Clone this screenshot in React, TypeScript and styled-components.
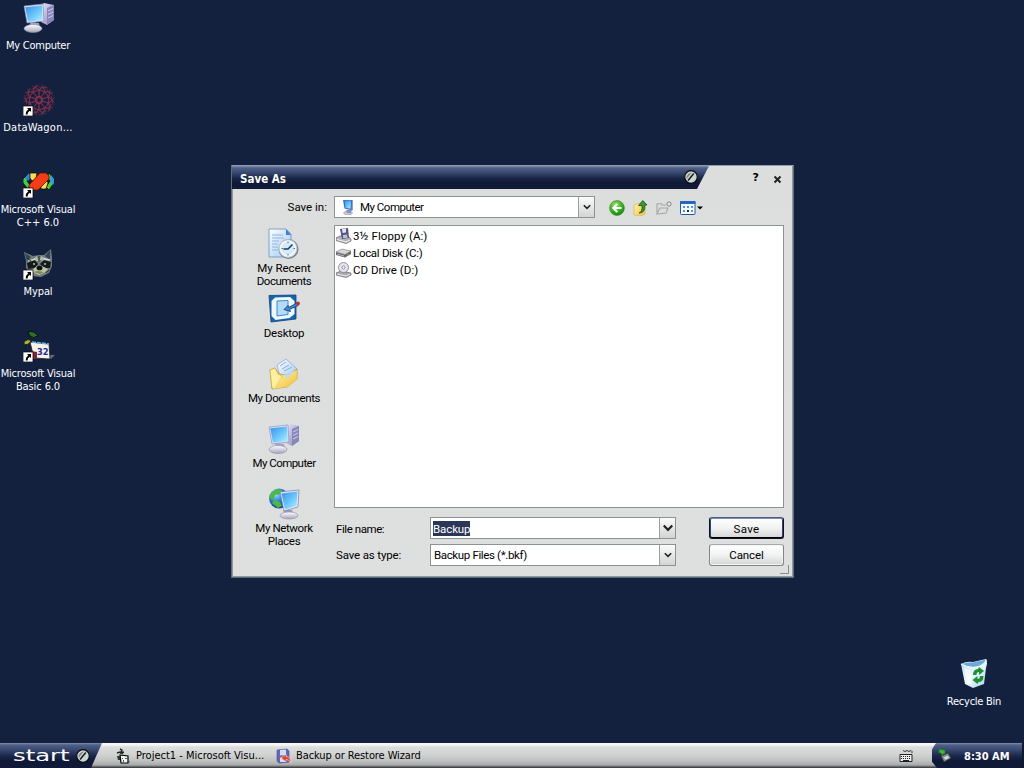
import React from "react";
import styled, { createGlobalStyle } from "styled-components";

const GlobalStyle = createGlobalStyle`
  * { box-sizing: border-box; }
  html, body { margin: 0; padding: 0; overflow: hidden; }
`;

const Screen = styled.div`
  position: relative;
  width: 1024px;
  height: 768px;
  display: flex;
  flex-direction: column;
  background: #13213f;
  font-family: "DejaVu Sans Condensed", "DejaVu Sans", sans-serif;
  font-size: 11px;
  overflow: hidden;
  cursor: default;
`;

const Desktop = styled.main`
  position: relative;
  flex: 1;
`;

const Txt = styled.span<{ $ls?: number }>`
  white-space: nowrap;
  letter-spacing: ${(p) => p.$ls ?? 0}px;
`;

const Caption = styled.div`
  display: flex;
  flex-direction: column;
  align-items: center;
`;

const Shortcut = styled.div<{ $x: number; $y: number }>`
  position: absolute;
  left: ${(p) => p.$x}px;
  top: ${(p) => p.$y}px;
  width: 78px;
  display: flex;
  flex-direction: column;
  align-items: center;
  gap: 5px;
  color: #fff;
  line-height: 13px;

  > svg {
    margin-left: 1px;
  }
`;

const Dialog = styled.section`
  position: absolute;
  left: 231px;
  top: 165px;
  width: 563px;
  height: 413px;
  display: flex;
  flex-direction: column;
  border: 1px solid #5f6c75;
  border-top-color: #8f9cae;
  box-shadow: inset -1px -1px 0 #8d9a9c, inset 1px 0 0 #8d9a9c;
  background: linear-gradient(#dcdddd, #dee0df);
  font-family: Roboto, sans-serif;
  font-size: 11.5px;
  color: #000;
`;

const TitleBar = styled.header`
  display: flex;
  height: 23px;
  align-items: stretch;
`;

const TitlePlate = styled.div`
  width: 477px;
  display: flex;
  align-items: center;
  justify-content: space-between;
  padding: 2px 11px 0 8px;
  clip-path: polygon(0 0, 100% 0, 465px 100%, 0 100%);
  background: linear-gradient(#8390ac 0, #4e5f88 2px, #3d4c74 6px, #1a274a 12px, #0f1936 17px, #101a38 100%);
  color: #fff;
  font: bold 11.5px "DejaVu Sans Condensed", sans-serif;

  > svg {
    margin-bottom: 3px;
  }
`;

const TitleButtons = styled.div`
  flex: 1;
  display: flex;
  justify-content: flex-end;
  align-items: center;
  gap: 14px;
  padding: 3px 11px 0 0;
  font: bold 11px "DejaVu Sans", sans-serif;
`;

const HelpMark = styled.span`
  padding-bottom: 3px;
`;

const DialogBody = styled.div`
  flex: 1;
  display: grid;
  grid-template-columns: 102px 450px;
  grid-template-rows: 36px 283px 1fr;
`;

const SaveInLabel = styled.label`
  padding: 11px 7px 0 0;
  text-align: right;
  line-height: 14px;
`;

const LookRow = styled.div`
  display: flex;
  align-items: center;
  padding: 0;
`;

const Combo = styled.div<{ $w: number; $h: number; $pad: number; $gap?: number }>`
  display: flex;
  align-items: center;
  width: ${(p) => p.$w}px;
  height: ${(p) => p.$h}px;
  border: 1px solid #8c9394;
  background: #fff;
  padding-left: ${(p) => p.$pad}px;
  gap: ${(p) => p.$gap ?? 0}px;
`;

const Arrow = styled.button`
  align-self: stretch;
  width: 16px;
  margin: 0 0 0 auto;
  padding: 0;
  display: flex;
  align-items: center;
  justify-content: center;
  border: 0;
  border-left: 1px solid #9aa0a2;
  background: linear-gradient(#fbfbfb, #d2d4d4);
`;

const Tools = styled.div`
  display: flex;
  align-items: center;
  gap: 7.500px;
  padding: 1px 0 0 14px;
`;

const Places = styled.nav`
  grid-row: 2 / 4;
  display: flex;
  flex-direction: column;
  padding: 3px 0 0 2px;
`;

const Place = styled.div`
  height: 65px;
  display: flex;
  flex-direction: column;
  align-items: center;
  gap: 2px;
  line-height: 13px;
`;

const FileList = styled.div`
  border: 1px solid #8c9394;
  background: #fff;
  padding: 1px 1px;
`;

const FileRow = styled.div`
  display: flex;
  align-items: center;
  height: 17px;
  gap: 1px;
`;

const Fields = styled.div`
  display: grid;
  grid-template-columns: 96px 279px 75px;
  grid-template-rows: 22px 22px;
  row-gap: 5px;
  padding-top: 9px;
  align-items: center;
`;

const FieldLabel = styled.label<{ $drop?: number }>`
  padding: ${(p) => p.$drop ?? 0}px 0 0 2px;
`;

const Selected = styled.span`
  background: #2b3658;
  color: #fff;
  line-height: 14px;
  padding-top: 1px;
`;

const PushButton = styled.button<{ $primary?: boolean }>`
  width: 75px;
  height: 22px;
  padding: ${(p) => (p.$primary ? "2px 0 0" : "0")};
  border-radius: 3px;
  font: inherit;
  color: #000;
  border: 1px solid ${(p) => (p.$primary ? "#0b1228" : "#7f8587")};
  border-top-color: ${(p) => (p.$primary ? "#4a5a82" : "#a5aaac")};
  box-shadow: ${(p) =>
    p.$primary
      ? "inset 0 1px #7f8eb4, inset 0 -1px #000, inset 1px 0 #34446c, inset -1px 0 #34446c"
      : "inset 0 0 0 1px #f6f6f6"};
  background: linear-gradient(#ffffff, #f1f2f2 50%, #d3d5d5);
`;

const Grip = styled.svg`
  position: absolute;
  right: 4px;
  bottom: 3px;
`;

const Taskbar = styled.footer`
  height: 25px;
  display: flex;
  align-items: stretch;
  background: linear-gradient(#fafafa 0, #f4f4f4 2px, #dcdddd 4px, #d2d4d3 11px, #bfc1c0 18px, #a9abab 22px, #55585c 24px, #2b2e36 25px);
  color: #000;
`;

const StartButton = styled.button`
  width: 102px;
  border: 0;
  padding: 1px 12px 0 13px;
  display: flex;
  align-items: center;
  justify-content: space-between;
  clip-path: polygon(0 0, 100% 0, 91px 100%, 0 100%);
  background: linear-gradient(#8390ac 0, #4e5f88 2px, #3d4c74 6px, #1a274a 13px, #0f1936 18px, #101a38 100%);
  color: #fff;
`;

const StartWord = styled.span`
  font: 15px/15px "DejaVu Sans", sans-serif;
  transform: scaleX(1.62);
  transform-origin: left;
  width: 57px;
  text-align: left;
`;

const Tasks = styled.div`
  flex: 1;
  display: flex;
  padding: 0 0 0 14px;
`;

const Task = styled.div<{ $w: number }>`
  width: ${(p) => p.$w}px;
  display: flex;
  align-items: center;
  gap: 4px;
`;

const Tray = styled.div`
  width: 92px;
  display: flex;
  align-items: center;
  gap: 12px;
  padding: 1px 0 0 6px;
  clip-path: polygon(4px 0, 100% 0, 100% 100%, 5px 100%, 0 75%, 0 25%);
  box-shadow: inset -2px 0 #101830;
  background: linear-gradient(#8390ac 0, #4e5f88 2px, #3d4c74 6px, #1a274a 13px, #0f1936 18px, #101a38 100%);
  color: #fff;
  font: bold 11px "DejaVu Sans Condensed", sans-serif;
`;

const KeyboardSlot = styled.div`
  display: flex;
  align-items: center;
  padding-right: 19px;
`;

const Defs = styled.svg`
  position: absolute;
`;

const Gradients = () => (
  <Defs width="0" height="0">
    <defs>
      <linearGradient id="scr" x1="0" y1="0" x2="1" y2="1">
        <stop offset="0" stopColor="#3d8fe4" />
        <stop offset=".5" stopColor="#66c3fb" />
        <stop offset="1" stopColor="#b8f0ff" />
      </linearGradient>
      <linearGradient id="case" x1="0" y1="0" x2="1" y2="1">
        <stop offset="0" stopColor="#e8e7f7" />
        <stop offset="1" stopColor="#8481b4" />
      </linearGradient>
      <linearGradient id="base" x1="0" y1="0" x2="0" y2="1">
        <stop offset="0" stopColor="#ffffff" />
        <stop offset="1" stopColor="#a5a5bc" />
      </linearGradient>
      <linearGradient id="folder" x1="0" y1="0" x2="1" y2="1">
        <stop offset="0" stopColor="#fff6b0" />
        <stop offset="1" stopColor="#f0bf3c" />
      </linearGradient>
      <linearGradient id="paper" x1="0" y1="0" x2="1" y2="1">
        <stop offset="0" stopColor="#ffffff" />
        <stop offset="1" stopColor="#9cc6f2" />
      </linearGradient>
      <radialGradient id="globe" cx=".35" cy=".3" r=".8">
        <stop offset="0" stopColor="#8be0ff" />
        <stop offset=".5" stopColor="#2277cf" />
        <stop offset="1" stopColor="#0c2f88" />
      </radialGradient>
      <radialGradient id="green" cx=".4" cy=".3" r=".8">
        <stop offset="0" stopColor="#9be06c" />
        <stop offset=".6" stopColor="#35a822" />
        <stop offset="1" stopColor="#137a12" />
      </radialGradient>
      <linearGradient id="bin" x1="0" y1="0" x2="1" y2="1">
        <stop offset="0" stopColor="#aed8f6" />
        <stop offset=".5" stopColor="#eefaff" />
        <stop offset="1" stopColor="#a4cdea" />
      </linearGradient>
    </defs>
  </Defs>
);

const ComputerIcon = () => (
  <svg width="32" height="32" viewBox="0 0 32 32">
    <path d="M18 3l3-2 10 2v15l-7 5-6-3z" fill="url(#case)" />
    <path d="M24 6l7-3v15l-7 5z" fill="#8885bb" />
    <path d="M25 9l5-2.500M25 12.500l5-2.500M25 16l5-2.500" stroke="#d5d3f0" />
    <path d="M7 20l9 1 1 5H8z" fill="#a4a4c4" />
    <ellipse cx="10" cy="26.500" rx="9" ry="4" fill="url(#base)" stroke="#8a8aa8" strokeWidth=".6" />
    <path d="M1 4l19-2 1 17-17 2z" fill="#dfe3f6" stroke="#8087b8" strokeWidth=".6" />
    <path d="M2.300 5.200l16.500-1.700 1 14.500L5 19.700z" fill="url(#scr)" />
  </svg>
);

const MiniComputer = () => (
  <svg width="16" height="16" viewBox="0 0 16 16">
    <path d="M10 1l3 0v10l-3 2z" fill="#9a98c4" />
    <ellipse cx="8" cy="14" rx="4.500" ry="1.800" fill="#c9c9da" stroke="#8888a5" strokeWidth=".5" />
    <path d="M6 11h5v3H7z" fill="#9292b4" />
    <path d="M3 1l9 .2-.5 10L4.500 9.500z" fill="#2d6fc4" />
    <path d="M4.500 2l6.500.3-.5 7.500-5-1z" fill="url(#scr)" />
  </svg>
);

const ShortcutMark = () => (
  <>
    <rect x="0" y="22" width="10" height="10" fill="#fff" stroke="#000" strokeWidth=".7" />
    <path d="M4 24h4v4L6.800 26.800Q4.500 28 4.500 30.500H2.800Q2.500 27 5.400 25.400z" fill="#000" />
  </>
);

const petals = [0, 36, 72, 108, 144, 180, 216, 252, 288, 324];

const DataWagonIcon = () => (
  <svg width="32" height="32" viewBox="0 0 32 32">
    <g fill="none" stroke="#82304a" strokeWidth=".7">
      {petals.map((a) => (
        <path key={a} d="M16 16Q9 9 11 4L16 1M16 16Q23 9 21 4L16 3M9 2l14 7M23 2L9 9" transform={`rotate(${a} 16 16)`} />
      ))}
      <circle cx="16" cy="16" r="3.500" stroke="#c03a54" />
    </g>
    <circle cx="16" cy="16" r="1.800" fill="#1c1c34" />
    <ShortcutMark />
  </svg>
);

const VisualCppIcon = () => (
  <svg width="32" height="32" viewBox="0 0 32 32">
    <path d="M6 7L0 13v4l5 6 2-4-3-4 4-5z" fill="#43cc3c" stroke="#000" strokeWidth=".7" />
    <path d="M6 7l-4 5 3 3 3-4z" fill="#2f7de0" />
    <path d="M7 12V7h7l-1 6-4 2z" fill="#f8dc50" stroke="#000" strokeWidth=".7" />
    <path d="M26 7l5 6v4l-5 7-3-3 4-6-3-4z" fill="#43cc3c" stroke="#000" strokeWidth=".7" />
    <path d="M28 9l3 4v4l-1 2-3-4z" fill="#2f9ae8" />
    <path d="M18 23v-5l6-4 1 3-2 6z" fill="#f8dc50" stroke="#000" strokeWidth=".7" />
    <path d="M6 19L17 7h6l3 3v3L15 24H9l-3-3z" fill="#f43d18" stroke="#5a1000" strokeWidth=".8" />
    <ShortcutMark />
  </svg>
);

const MypalIcon = () => (
  <svg width="32" height="32" viewBox="0 0 32 32">
    <path d="M1 4l9 4 6-1 5 0 7-6 1 9 0 8-3 7-8 4-9-1-6-8 0-7z" fill="#6f7c78" />
    <path d="M2 5l6 4-4 4zM27 2l-5 6 5 4z" fill="#34435a" />
    <path d="M14 8l2 7 2-7 6 3-3 2-4-1-5 2-4-1z" fill="#b0bab0" />
    <path d="M4 15l8-3 3 4-3 4-7 1zM28 14l-7-2-4 4 4 4 6 0z" fill="#141a1e" />
    <path d="M5 13l7-2M27 12l-6-1" stroke="#d8dfd0" strokeWidth="1.300" />
    <circle cx="11" cy="16" r=".9" fill="#c6d69a" />
    <circle cx="22" cy="16" r=".9" fill="#c6d69a" />
    <path d="M9 22l5-4h5l6 3-4 4-5 2-5-2z" fill="#c0c4a4" />
    <path d="M10 24l5-1 6 1-4 2z" fill="#7d8560" />
    <ellipse cx="16.500" cy="20" rx="3" ry="2.300" fill="#10120f" />
    <path d="M16 8v6M4 10l4 3M26 22l-3 3" stroke="#2b3332" />
    <ShortcutMark />
  </svg>
);

const VisualBasicIcon = () => (
  <svg width="32" height="32" viewBox="0 0 32 32">
    <path d="M5 2q6-2 10 4-5 3-8 0z" fill="#2f6d2a" stroke="#071306" />
    <path d="M1 12q4-4 7-1-3 5-7 3z" fill="#b2b33a" stroke="#24290a" />
    <path d="M24 25h8l-4 4h-6z" fill="#606b82" />
    <path d="M7 12l19 2 1 15-16-1z" fill="#f5f3e7" stroke="#1c1c20" strokeWidth=".8" />
    <path d="M9 12l17 2" stroke="#5db7ea" strokeWidth="1.600" strokeDasharray="4 1" />
    <path d="M8 21l6 1v7h-4z" fill="#812536" />
    <text x="14" y="25" fontFamily="DejaVu Sans" fontSize="9.500" fontWeight="bold" fill="#26269a" textLength="11.500" lengthAdjust="spacingAndGlyphs">32</text>
    <ShortcutMark />
  </svg>
);

const RecycleIcon = () => (
  <svg width="32" height="32" viewBox="0 0 32 32">
    <path d="M2 6q5-3 12-2l13-3q2 3 0 9l-2 16-11 4-8-4z" fill="url(#bin)" />
    <path d="M3 6q5-2 11-1.500L27 1.500q0 4-6 6-9 3-18-1.500z" fill="#6ea6da" />
    <path d="M2 6q10 6 19 2 6-3 6-6.500" fill="none" stroke="#e5f6ff" strokeWidth="1.200" />
    <path d="M5 10l3 15 5 2-2-15z" fill="#fff" opacity=".65" />
    <g fill="#1f9030">
      <path d="M14 17q0-6 5-6l1-2 5 4-5 4v-3q-2.500 0-2.500 3z" />
      <path d="M24.500 18q0 6-5 6l-1 2-5-4 5-4v3q2.500 0 2.500-3z" />
    </g>
  </svg>
);

const RecentIcon = () => (
  <svg width="32" height="32" viewBox="0 0 32 32">
    <path d="M1 1h17l5 5v23H1z" fill="url(#paper)" stroke="#5f8fcb" strokeWidth=".8" />
    <path d="M18 1l5 6h-5z" fill="#3d7fd0" />
    <path d="M4 7h11M4 10h12M4 13h7M4 16h6M4 19h6M4 22h6" stroke="#8cb3e6" />
    <circle cx="20.500" cy="21" r="10" fill="#77818f" />
    <circle cx="20" cy="20.500" r="8.800" fill="#f4f7fa" stroke="#c4ccd6" />
    <circle cx="20" cy="20.500" r="6.500" fill="#d4eaf7" />
    <path d="M19.500 21.500l5-5M20 21h-4.500" stroke="#183b64" strokeWidth="1.500" />
    <path d="M20 13.500V15M20 26v1.500M13.500 20.500H15M25.500 20.500H27" stroke="#4f6b8c" />
  </svg>
);

const DesktopIcon = () => (
  <svg width="32" height="32" viewBox="0 0 32 32">
    <path d="M1 2.500L28 2v24L3 29z" fill="#1763ad" stroke="#0c4381" strokeWidth=".8" />
    <path d="M7 4.500l15-.5 4.500 4v13l-5 4-14 2-4-4V8z" fill="#eef8fd" />
    <path d="M9 8l11-.5v14L9 23z" fill="#b4dcf8" stroke="#3b88cd" />
    <path d="M16 16.500l4-4 .6 2L29 10l1 2.500-8.500 4 1 2z" fill="#3f8cd4" stroke="#143f78" strokeWidth=".9" />
    <circle cx="30" cy="10.500" r="1.900" fill="#c62d35" />
  </svg>
);

const DocumentsIcon = () => (
  <svg width="32" height="32" viewBox="0 0 32 32">
    <path d="M9 7l9-6 11 10-5 12-12-4z" fill="url(#paper)" stroke="#7ba6d8" strokeWidth=".7" />
    <path d="M12 8l6-4M14 11l7-4M16 13l8-4" stroke="#86aede" />
    <path d="M2 12l5-2 4 6 8 1 10-6v10l-10 8-15 2z" fill="url(#folder)" stroke="#b88b26" strokeWidth=".7" />
    <path d="M15 17l12-6-7 10z" fill="#b5dcf4" opacity=".9" />
    <path d="M2 12l5-2 3 6 4 2-7 13-3-1z" fill="#fff0a0" stroke="#c49d39" strokeWidth=".5" />
    <path d="M5 31l7-11 8-1 9-7v10l-9 7z" fill="url(#folder)" opacity=".75" />
  </svg>
);

const NetworkIcon = () => (
  <svg width="32" height="32" viewBox="0 0 32 32">
    <circle cx="11" cy="10.500" r="10" fill="url(#globe)" />
    <path d="M3 5l6-4 5 1-2 4-5 1-2 5-4-2zM6 12l6 2 2 4-4 2-6-5z" fill="#4fb841" />
    <path d="M15 22h9l2 5h-9z" fill="#9b9cba" />
    <ellipse cx="21" cy="27.500" rx="9" ry="3.500" fill="url(#base)" stroke="#8a8aa8" strokeWidth=".6" />
    <path d="M12 4l19-2-1 17-14 4z" fill="#e5e8f8" stroke="#777eaa" strokeWidth=".7" />
    <path d="M13.500 5.500l16-2-1 14.500L17 21.300z" fill="url(#scr)" />
  </svg>
);

const BadgeIcon = () => (
  <svg width="14" height="14" viewBox="0 0 14 14">
    <circle cx="7" cy="7" r="6.300" fill="#cdd5cf" stroke="#070b14" strokeWidth="1.200" />
    <path d="M2.500 9Q2 4 8 2.200z" fill="#77837d" />
    <path d="M4 10.500L9.800 3.500" stroke="#10151c" strokeWidth="1.400" />
  </svg>
);

const FloppyIcon = () => (
  <svg width="16" height="16" viewBox="0 0 16 16">
    <path d="M0 10l4-2h8l3 3v2l-5 2.500-10-3z" fill="#b4b4b8" stroke="#65656c" strokeWidth=".7" />
    <path d="M4 1l8-1 1 10-7 1z" fill="#50547f" />
    <path d="M6 1l4-.5v4L6.500 5z" fill="#e3e5f1" />
    <path d="M7 7l4-.5.5 3.500H7z" fill="#b9bdd7" />
    <path d="M1 11.500l9 2.500 4-2" stroke="#f4f4f4" fill="none" />
  </svg>
);

const DiskIcon = () => (
  <svg width="16" height="16" viewBox="0 0 16 16">
    <path d="M0 7l6-3 9 2v3l-6 3.500L0 10z" fill="#66666a" />
    <path d="M0 7l6-3 9 2-6 3.500z" fill="#d6d6d8" stroke="#85858a" strokeWidth=".5" />
    <path d="M1 9l7 2" stroke="#b8b8bc" />
    <circle cx="12" cy="9.500" r=".7" fill="#63c25b" />
  </svg>
);

const CdIcon = () => (
  <svg width="16" height="16" viewBox="0 0 16 16">
    <path d="M0 11l5-2 10 2v2l-5 2.500-10-2.500z" fill="#a9a9ad" stroke="#66666b" strokeWidth=".7" />
    <circle cx="7.500" cy="5.500" r="5" fill="#e4e4ee" stroke="#7e7e88" strokeWidth=".8" />
    <circle cx="7.500" cy="5.500" r="1.500" fill="#fff" stroke="#777785" strokeWidth=".8" />
    <path d="M1 12l9 2 4-2" stroke="#f1f1f1" fill="none" />
  </svg>
);

const BackIcon = () => (
  <svg width="16" height="16" viewBox="0 0 16 16">
    <circle cx="8" cy="8" r="7.400" fill="url(#green)" stroke="#2d8a20" strokeWidth=".6" />
    <path d="M12.500 8H5M8.300 4L4.300 8l4 4" fill="none" stroke="#fff" strokeWidth="2" />
  </svg>
);

const UpIcon = () => (
  <svg width="16" height="16" viewBox="0 0 16 16">
    <path d="M1 5l5-2 1 1h5v10l-4 2-7-1z" fill="url(#folder)" stroke="#d5b850" strokeWidth=".7" />
    <path d="M6 13q3.500-1 3-7.500H5.500L9.800.5 14 5h-2.200q.8 8-5.800 8z" fill="#3a9a2c" stroke="#1d4c18" strokeWidth=".8" />
  </svg>
);

const NewFolderIcon = () => (
  <svg width="16" height="16" viewBox="0 0 16 16">
    <path d="M1 14V4l4-.5 1 1.500h4M1 14l3-6h8l-2 5z" fill="#dcdddd" stroke="#a8a9a9" strokeWidth="1.100" />
    <path d="M13 1v6M10 4h6M11 2l4 4M15 2l-4 4" stroke="#858686" />
    <circle cx="13" cy="4" r="1.200" fill="#e8e8e8" />
  </svg>
);

const ViewIcon = () => (
  <svg width="23" height="16" viewBox="0 0 23 16">
    <rect x=".5" y="1.500" width="14.500" height="13" rx="1" fill="#f4faff" stroke="#1d5ca8" />
    <path d="M0 2.500h15.500" stroke="#2468bd" strokeWidth="3" />
    <path d="M3 6h2v2H3zM7 6h2v2H7zM11 6h2v2h-2zM3 10h2v2H3zM11 10h2v2h-2z" fill="#5c92c8" />
    <path d="M7 10h2v2H7z" fill="#12324f" />
    <path d="M17 6.500h6l-3 3z" fill="#000" />
  </svg>
);

const Chevron = ({ big }: { big?: boolean }) => (
  <svg width={big ? 12 : 8} height={big ? 8 : 6} viewBox="0 0 8 6">
    <path d="M.8 1.200L4 4.400l3.200-3.200" fill="none" stroke="#222" strokeWidth="1.600" />
  </svg>
);

const VbTaskIcon = () => (
  <svg width="16" height="16" viewBox="0 0 16 16">
    <path d="M4 1l2 1-1 3 3-1M1 5l3-1 3 2" fill="none" stroke="#1b2a1b" strokeWidth="1.400" />
    <path d="M4 7l8 1v7H5z" fill="#f4f4ec" stroke="#000" strokeWidth="1.200" />
    <path d="M6 10h1v1H6zM9 10h2v1H9zM7 12h1v2H7z" fill="#1c6f74" />
    <path d="M1 8h3v4H2z" fill="#333" />
    <path d="M12 13h2l-1 2z" fill="#555" />
  </svg>
);

const BackupTaskIcon = () => (
  <svg width="16" height="16" viewBox="0 0 16 16">
    <path d="M1 2l10-1 2 2v11l-10 1-2-2z" fill="#6468b4" stroke="#454a8c" strokeWidth=".6" />
    <path d="M4 2l6-.5V7L4 7.500z" fill="#d5dcf0" />
    <path d="M4 14V9.500h5V14z" fill="#dcdce8" />
    <path d="M5 10l5-4v2.500q5 0 5 6-2-3-5-3V14z" fill="#e8432c" stroke="#fff" strokeWidth=".5" />
  </svg>
);

const KeyboardIcon = () => (
  <svg width="14" height="14" viewBox="0 0 14 14">
    <path d="M4 1.500l2 1 2-1 2 1 2-1 1 1v1.500" fill="none" stroke="#222" strokeWidth=".9" />
    <path d="M1 5.500h12v7H1z" fill="#eee" stroke="#222" />
    <path d="M2 7.500h10M2 9.500h10" stroke="#222" strokeDasharray="1 1" />
    <path d="M4 11.500h6" stroke="#222" />
  </svg>
);

const TrayIcon = () => (
  <svg width="14" height="14" viewBox="0 0 14 14">
    <path d="M3 7l7-3 3 5-7 4z" fill="#7f8a8c" stroke="#2a3338" strokeWidth=".7" />
    <path d="M5.500 8.500l4-2 2 2.500-4 1.800z" fill="#cfd8da" />
    <path d="M1 0l6 1v4l-2 0-1 2-1-3-2 0z" fill="#3cb83a" stroke="#176a1c" strokeWidth=".6" />
  </svg>
);

type Line = [text: string, spacing: number];

const shortcuts: { x: number; y: number; icon: React.ReactNode; lines: Line[] }[] = [
  { x: -1, y: 2, icon: <ComputerIcon />, lines: [["My Computer", -0.25]] },
  { x: -1, y: 84, icon: <DataWagonIcon />, lines: [["DataWagon...", 0.22]] },
  { x: -1, y: 166, icon: <VisualCppIcon />, lines: [["Microsoft Visual", -0.19], ["C++ 6.0", 0]] },
  { x: -1, y: 248, icon: <MypalIcon />, lines: [["Mypal", -0.1]] },
  { x: -1, y: 330, icon: <VisualBasicIcon />, lines: [["Microsoft Visual", -0.19], ["Basic 6.0", -0.1]] },
  { x: 935, y: 658, icon: <RecycleIcon />, lines: [["Recycle Bin", -0.25]] },
];

const places: { icon: React.ReactNode; lines: Line[] }[] = [
  { icon: <RecentIcon />, lines: [["My Recent", -0.05], ["Documents", -0.45]] },
  { icon: <DesktopIcon />, lines: [["Desktop", -0.2]] },
  { icon: <DocumentsIcon />, lines: [["My Documents", -0.42]] },
  { icon: <ComputerIcon />, lines: [["My Computer", -0.55]] },
  { icon: <NetworkIcon />, lines: [["My Network", -0.4], ["Places", -0.3]] },
];

const drives = [
  { icon: <FloppyIcon />, name: "3½ Floppy (A:)", ls: 0.08 },
  { icon: <DiskIcon />, name: "Local Disk (C:)", ls: -0.3 },
  { icon: <CdIcon />, name: "CD Drive (D:)", ls: 0.03 },
];

const Lines = ({ lines }: { lines: Line[] }) => (
  <Caption>
    {lines.map(([text, spacing]) => (
      <Txt key={text} $ls={spacing}>{text}</Txt>
    ))}
  </Caption>
);

export default function App() {
  return (
    <>
      <GlobalStyle />
      <Gradients />
      <Screen>
        <Desktop>
          {shortcuts.map((s) => (
            <Shortcut key={s.y} $x={s.x} $y={s.y}>
              {s.icon}
              <Lines lines={s.lines} />
            </Shortcut>
          ))}
          <Dialog>
            <TitleBar>
              <TitlePlate>
                <Txt>Save As</Txt>
                <BadgeIcon />
              </TitlePlate>
              <TitleButtons>
                <HelpMark>?</HelpMark>
                <svg width="9" height="9" viewBox="0 0 9 9">
                  <path d="M1.500 1.500l6 6M7.500 1.500l-6 6" stroke="#222" strokeWidth="2" />
                </svg>
              </TitleButtons>
            </TitleBar>
            <DialogBody>
              <SaveInLabel>
                <Txt>Save in:</Txt>
              </SaveInLabel>
              <LookRow>
                <Combo $w={261} $h={22} $pad={5} $gap={4}>
                  <MiniComputer />
                  <Txt $ls={-0.5}>My Computer</Txt>
                  <Arrow>
                    <Chevron />
                  </Arrow>
                </Combo>
                <Tools>
                  <BackIcon />
                  <UpIcon />
                  <NewFolderIcon />
                  <ViewIcon />
                </Tools>
              </LookRow>
              <Places>
                {places.map((p) => (
                  <Place key={p.lines[0][0]}>
                    {p.icon}
                    <Lines lines={p.lines} />
                  </Place>
                ))}
              </Places>
              <FileList>
                {drives.map((d) => (
                  <FileRow key={d.name}>
                    {d.icon}
                    <Txt $ls={d.ls}>{d.name}</Txt>
                  </FileRow>
                ))}
              </FileList>
              <Fields>
                <FieldLabel $drop={2}>
                  <Txt $ls={-0.43}>File name:</Txt>
                </FieldLabel>
                <Combo $w={246} $h={22} $pad={2}>
                  <Selected>
                    <Txt $ls={-0.1}>Backup</Txt>
                  </Selected>
                  <Arrow>
                    <Chevron big />
                  </Arrow>
                </Combo>
                <PushButton $primary>
                  <Txt $ls={0.3}>Save</Txt>
                </PushButton>
                <FieldLabel>
                  <Txt $ls={-0.15}>Save as type:</Txt>
                </FieldLabel>
                <Combo $w={246} $h={22} $pad={3}>
                  <Txt $ls={-0.36}>Backup Files (*.bkf)</Txt>
                  <Arrow>
                    <Chevron />
                  </Arrow>
                </Combo>
                <PushButton>
                  <Txt $ls={-0.1}>Cancel</Txt>
                </PushButton>
              </Fields>
            </DialogBody>
            <Grip width="10" height="10" viewBox="0 0 10 10">
              <path d="M9.500 1v8.500H1" fill="none" stroke="#888e90" />
            </Grip>
          </Dialog>
        </Desktop>
        <Taskbar>
          <StartButton>
            <StartWord>start</StartWord>
            <BadgeIcon />
          </StartButton>
          <Tasks>
            <Task $w={160}>
              <VbTaskIcon />
              <Txt>Project1 - Microsoft Visu...</Txt>
            </Task>
            <Task $w={200}>
              <BackupTaskIcon />
              <Txt $ls={-0.09}>Backup or Restore Wizard</Txt>
            </Task>
          </Tasks>
          <KeyboardSlot>
            <KeyboardIcon />
          </KeyboardSlot>
          <Tray>
            <TrayIcon />
            <Txt>8:30 AM</Txt>
          </Tray>
        </Taskbar>
      </Screen>
    </>
  );
}
